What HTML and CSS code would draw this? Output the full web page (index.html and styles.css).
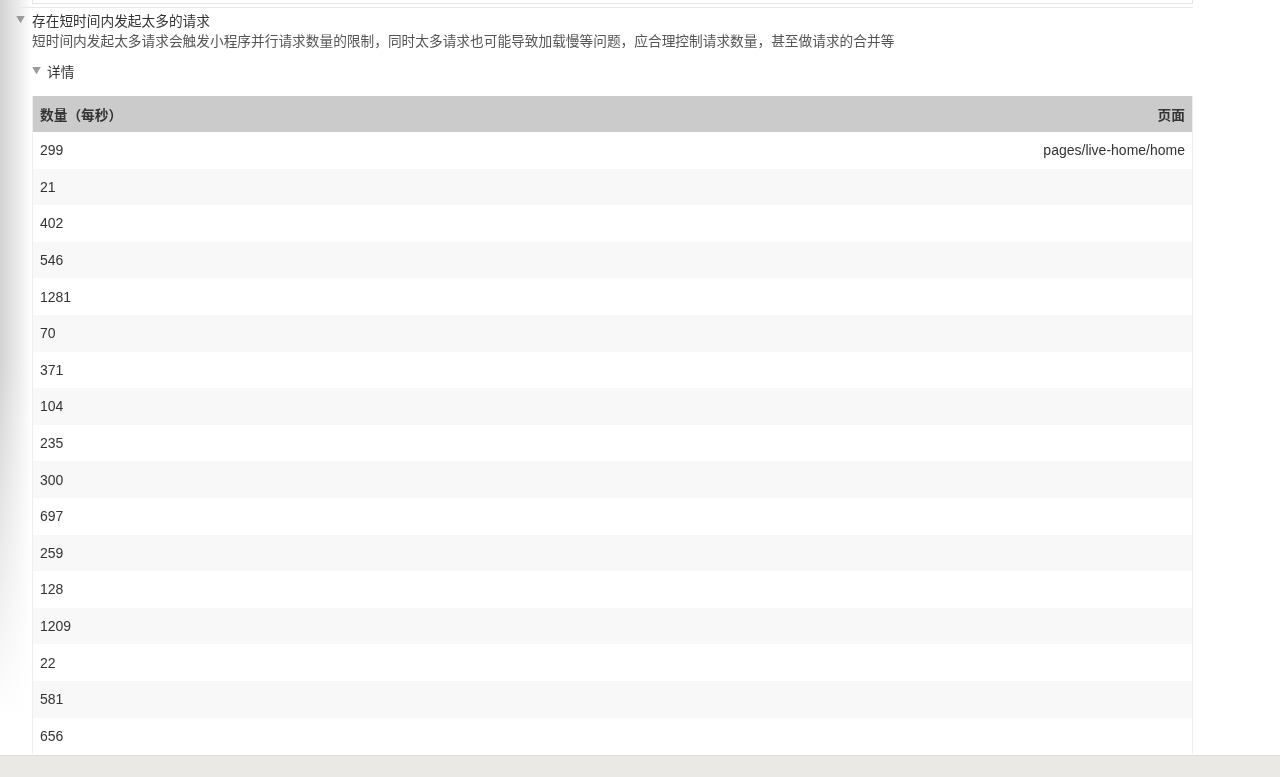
FILE: index.html
```html
<!DOCTYPE html>
<html lang="zh-CN">
<head>
  <meta charset="UTF-8" />
  <meta name="viewport" content="width=device-width, initial-scale=1.0" />
  <title>性能诊断</title>
  <link rel="stylesheet" href="styles.css">
</head>
<body>

  <div class="prev-item"></div>

  <div class="issue">
    <div class="issue-title"><span class="arrow">▼</span>存在短时间内发起太多的请求</div>
    <div class="issue-desc">短时间内发起太多请求会触发小程序并行请求数量的限制，同时太多请求也可能导致加载慢等问题，应合理控制请求数量，甚至做请求的合并等</div>

    <div class="details">
      <div class="details-title"><span class="arrow">▼</span>详情</div>
      <table class="data-table">
        <thead>
          <tr><th>数量（每秒）</th><th class="right">页面</th></tr>
        </thead>
        <tbody>
          <tr><td>299</td><td class="right">pages/live-home/home</td></tr>
          <tr><td>21</td><td></td></tr>
          <tr><td>402</td><td></td></tr>
          <tr><td>546</td><td></td></tr>
          <tr><td>1281</td><td></td></tr>
          <tr><td>70</td><td></td></tr>
          <tr><td>371</td><td></td></tr>
          <tr><td>104</td><td></td></tr>
          <tr><td>235</td><td></td></tr>
          <tr><td>300</td><td></td></tr>
          <tr><td>697</td><td></td></tr>
          <tr><td>259</td><td></td></tr>
          <tr><td>128</td><td></td></tr>
          <tr><td>1209</td><td></td></tr>
          <tr><td>22</td><td></td></tr>
          <tr><td>581</td><td></td></tr>
          <tr><td>656</td><td></td></tr>
        </tbody>
      </table>
    </div>
  </div>

  <div class="status-bar"></div>

</body>
</html>
```

FILE: styles.css
```css
body {
  font-family: "Liberation Sans", "Noto Sans CJK SC", sans-serif;
  font-size: 14px;
  color: #333;
  background-color: #fff;
  margin: 0;
  padding: 0;
}

/* soft shadow on the left edge */
body::before {
  content: "";
  position: fixed;
  left: 0;
  top: 0;
  width: 32px;
  height: 720px;
  background: linear-gradient(to right, #d2d2d2, rgba(255, 255, 255, 0));
  -webkit-mask-image: linear-gradient(to bottom, #000 50%, transparent);
  mask-image: linear-gradient(to bottom, #000 50%, transparent);
}

.prev-item {
  position: relative;
  margin-left: 32px;
  width: 1159px;
  height: 3px;
  border: 1px solid #e6e6e6;
  border-top: none;
}

.issue {
  position: relative;
  margin-left: 12px;
  margin-top: 3px;
  width: 1181px;
  border-top: 1px solid #e8e8e8;
  padding-top: 2px;
}

.issue-title,
.issue-desc,
.details-title {
  font-family: "Noto Sans CJK SC", "Liberation Sans", sans-serif;
  font-size: 13.7px;
  line-height: 20px;
}

.issue-title {
  display: flex;
}

.issue-desc {
  padding-left: 20px;
  color: #555;
}

.arrow {
  color: #9a9a9a;
  font-size: 9px;
  padding-left: 4px;
  width: 16px;
}

.details {
  padding-left: 20px;
  margin-top: 11px;
}

.details-title {
  display: flex;
}

.details-title .arrow {
  padding-left: 0;
  width: 15px;
}

.data-table {
  width: 1161px;
  margin-top: 15px;
  border-collapse: collapse;
  border-left: 1px solid #eee;
  border-right: 1px solid #eee;
}

.data-table th {
  background-color: #cbcbcb;
  font-family: "Noto Sans CJK SC", "Liberation Sans", sans-serif;
  font-size: 13.7px;
  font-weight: bold;
  text-align: left;
  height: 36px;
  padding: 0 7px;
  color: #333;
}

.data-table td {
  height: 36.6px;
  padding: 0 7px;
}

.data-table .right {
  text-align: right;
}

.data-table tbody tr:nth-child(even) {
  background-color: #f8f8f8;
}

.status-bar {
  position: fixed;
  left: 0;
  right: 0;
  bottom: 0;
  height: 21px;
  background-color: #eae9e5;
  border-top: 1px solid #dcdcdc;
}
```
